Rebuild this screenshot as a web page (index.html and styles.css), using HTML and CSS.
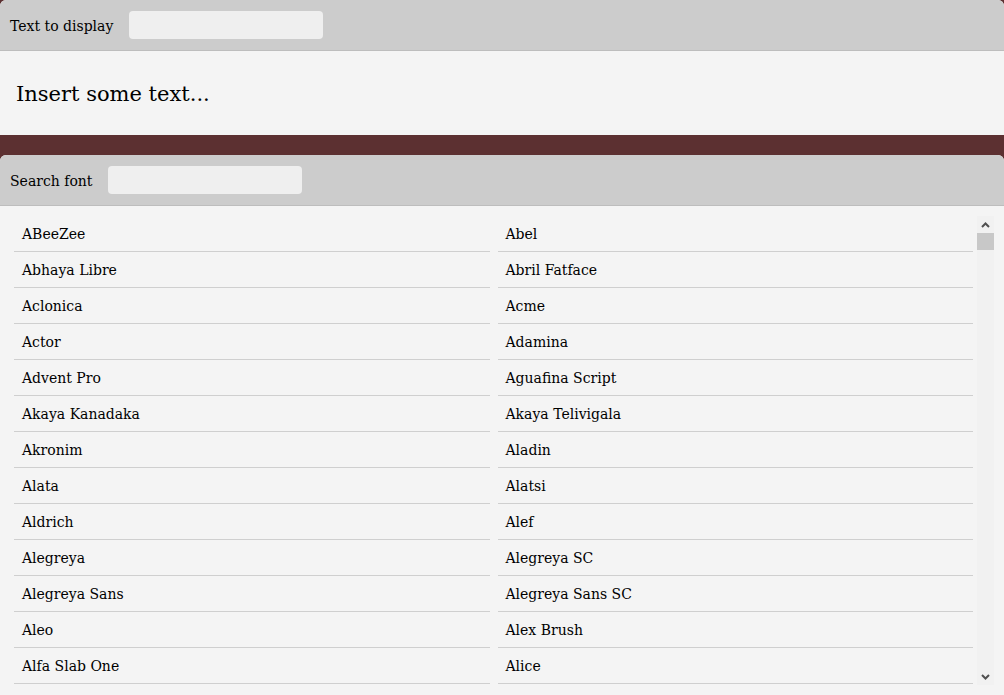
FILE: index.html
```html
<!DOCTYPE html>
<html>
<head>
<meta charset="utf-8">
<link rel="stylesheet" href="styles.css">
</head>
<body>
<div class="app">
  <section class="panel top-panel">
    <div class="bar">
      <label class="bar-label">Text to display</label>
      <input class="bar-input" type="text">
    </div>
    <div class="preview">Insert some text...</div>
  </section>
  <section class="panel font-panel">
    <div class="bar">
      <label class="bar-label">Search font</label>
      <input class="bar-input" type="text">
    </div>
    <div class="list-wrap">
      <ul class="font-list">
        <li>ABeeZee</li><li>Abel</li>
        <li>Abhaya Libre</li><li>Abril Fatface</li>
        <li>Aclonica</li><li>Acme</li>
        <li>Actor</li><li>Adamina</li>
        <li>Advent Pro</li><li>Aguafina Script</li>
        <li>Akaya Kanadaka</li><li>Akaya Telivigala</li>
        <li>Akronim</li><li>Aladin</li>
        <li>Alata</li><li>Alatsi</li>
        <li>Aldrich</li><li>Alef</li>
        <li>Alegreya</li><li>Alegreya SC</li>
        <li>Alegreya Sans</li><li>Alegreya Sans SC</li>
        <li>Aleo</li><li>Alex Brush</li>
        <li>Alfa Slab One</li><li>Alice</li>
      </ul>
      <div class="scrollbar" aria-hidden="true">
        <div class="sb-btn">
          <svg width="9" height="6" viewBox="0 0 9 6"><path d="M1 5 L4.5 1.5 L8 5" fill="none" stroke="#505050" stroke-width="2"/></svg>
        </div>
        <div class="sb-track"><div class="sb-thumb"></div></div>
        <div class="sb-btn">
          <svg width="9" height="6" viewBox="0 0 9 6"><path d="M1 1 L4.5 4.5 L8 1" fill="none" stroke="#505050" stroke-width="2"/></svg>
        </div>
      </div>
    </div>
  </section>
</div>
</body>
</html>
```

FILE: styles.css
```css
html, body {
  margin: 0;
  padding: 0;
  height: 100%;
}
body {
  background: #5c3031;
  font-family: "DejaVu Serif", Georgia, serif;
  color: #000;
  overflow: hidden;
}
.app {
  display: flex;
  flex-direction: column;
  gap: 20px;
  height: 100%;
}
.panel {
  background: #f4f4f4;
  border-radius: 6px 6px 0 0;
  overflow: hidden;
}
.bar {
  display: flex;
  align-items: center;
  gap: 16px;
  height: 50px;
  padding: 0 10px;
  background: #cccccc;
  border-bottom: 1px solid #bdbdbd;
}
.bar-label {
  font-size: 14px;
  padding-top: 1px;
}
.bar-input {
  width: 194px;
  height: 28px;
  box-sizing: border-box;
  border: none;
  border-radius: 4px;
  background: #efefef;
  padding: 0 6px;
  outline: none;
}
.preview {
  height: 84px;
  display: flex;
  align-items: center;
  padding-left: 16px;
  padding-top: 2px;
  box-sizing: border-box;
  font-size: 21px;
}
.font-panel {
  flex: 1;
  display: flex;
  flex-direction: column;
  min-height: 0;
}
.list-wrap {
  flex: 1;
  min-height: 0;
  margin: 10px;
  display: flex;
  overflow: hidden;
}
.font-list {
  flex: 1;
  min-width: 0;
  list-style: none;
  margin: 0;
  padding: 0;
  display: grid;
  grid-template-columns: 1fr 1fr;
  align-content: start;
  overflow: hidden;
}
.font-list li {
  margin: 0 4px;
  height: 35px;
  line-height: 36px;
  padding-left: 8px;
  border-bottom: 1px solid #cfcfcf;
  font-size: 14px;
}
.scrollbar {
  width: 17px;
  flex: none;
  display: flex;
  flex-direction: column;
  background: #f1f1f1;
}
.sb-btn {
  height: 17px;
  display: flex;
  align-items: center;
  justify-content: center;
}
.sb-track {
  flex: 1;
}
.sb-thumb {
  height: 17px;
  background: #c8c8c8;
}
```
